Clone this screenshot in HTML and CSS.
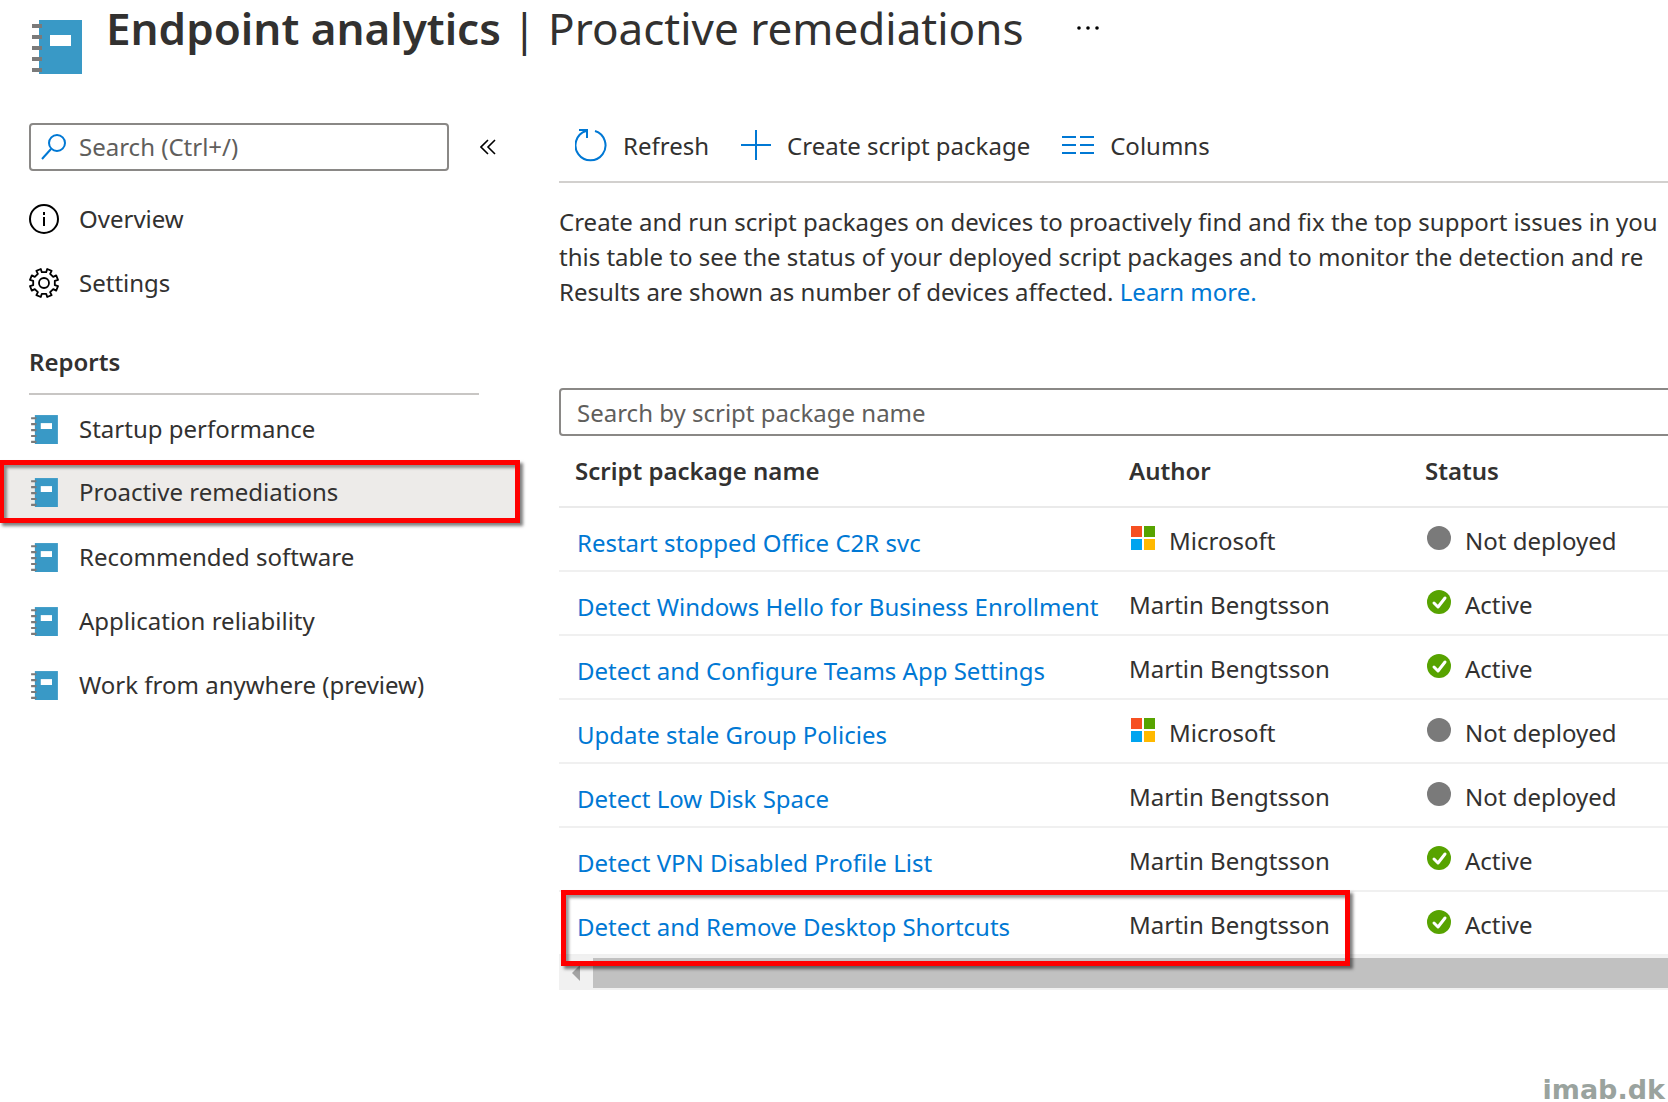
FILE: index.html
```
<!DOCTYPE html>
<html lang="en">

<head>
    <meta charset="utf-8">
    <title>Endpoint analytics | Proactive remediations</title>
    <link rel="stylesheet" href="styles.css">
</head>

<body>
    <!-- shared icons -->
    <svg class="sprite" aria-hidden="true">
        <symbol id="icon-book" viewBox="0 0 50 56">
            <path fill="#3999c6" d="M7 2h43v54H7z" />
            <path fill="#fff" d="M18 17h21v11H18z" />
            <path fill="#7a7a7a" d="M0 6h10v4H0zM0 17h10v4H0zM0 28h10v4H0zM0 39h10v4H0zM0 50h10v4H0z" />
        </symbol>
        <symbol id="icon-microsoft" viewBox="0 0 24 24">
            <path fill="#f65022" d="M0 0h11v11H0z" />
            <path fill="#57a300" d="M13 0h11v11H13z" />
            <path fill="#00a4ef" d="M0 13h11v11H0z" />
            <path fill="#ffb900" d="M13 13h11v11H13z" />
        </symbol>
        <symbol id="icon-off" viewBox="0 0 24 24">
            <circle cx="12" cy="12" r="12" fill="#7a7a7a" />
        </symbol>
        <symbol id="icon-ok" viewBox="0 0 24 24">
            <circle cx="12" cy="12" r="12" fill="#57a300" />
            <path fill="none" stroke="#fff" stroke-width="3" stroke-linecap="round" stroke-linejoin="round" d="M7 13l4 4 7-9" />
        </symbol>
    </svg>

    <header class="title-bar">
        <svg class="title-icon"><use href="#icon-book" /></svg>
        <h1><strong>Endpoint analytics</strong> | Proactive remediations</h1>
        <button type="button" class="more" aria-label="More">
            <svg width="24" height="6" viewBox="0 0 24 6">
                <circle cx="3" cy="3" r="1.8" />
                <circle cx="12" cy="3" r="1.8" />
                <circle cx="21" cy="3" r="1.8" />
            </svg>
        </button>
    </header>

    <div class="layout">
        <nav class="sidebar">
            <div class="menu-search">
                <label class="search-box">
                    <svg width="26" height="26" viewBox="0 0 26 26" fill="none" stroke="#0078d4" stroke-width="2">
                        <circle cx="16" cy="9" r="8" />
                        <path d="M10 15L1 25" />
                    </svg>
                    <input type="text" placeholder="Search (Ctrl+/)" aria-label="Search">
                </label>
                <button type="button" class="collapse" aria-label="Collapse menu">
                    <svg width="16" height="16" viewBox="0 0 16 16" fill="none" stroke="#000" stroke-width="1.6">
                        <path d="M8 1L1 8l7 7M15 1L8 8l7 7" />
                    </svg>
                </button>
            </div>
            <a class="menu-item" href="#">
                <svg class="menu-icon" viewBox="0 0 30 30" fill="none" stroke="#000" stroke-width="2">
                    <circle cx="15" cy="15" r="14" />
                    <path d="M15 13v9M15 8v3" />
                </svg>
                Overview
            </a>
            <a class="menu-item" href="#">
                <svg class="menu-icon" viewBox="-15 -15 30 30" fill="none" stroke="#000" stroke-width="1.8">
                    <circle r="5" />
                    <path stroke-linejoin="round" d="M-3.2 -14L-2.2 -10.8H2.2L3.2 -14L7.6 -12.2L6.1 -9.2L9.2 -6.1L12.2 -7.6L14 -3.2L10.8 -2.2V2.2L14 3.2L12.2 7.6L9.2 6.1L6.1 9.2L7.6 12.2L3.2 14L2.2 10.8H-2.2L-3.2 14L-7.6 12.2L-6.1 9.2L-9.2 6.1L-12.2 7.6L-14 3.2L-10.8 2.2V-2.2L-14 -3.2L-12.2 -7.6L-9.2 -6.1L-6.1 -9.2L-7.6 -12.2z" />
                </svg>
                Settings
            </a>
            <h2>Reports</h2>
            <a class="menu-item" href="#"><svg class="menu-icon book"><use href="#icon-book" /></svg>Startup performance</a>
            <a class="menu-item active" href="#"><svg class="menu-icon book"><use href="#icon-book" /></svg>Proactive remediations</a>
            <a class="menu-item" href="#"><svg class="menu-icon book"><use href="#icon-book" /></svg>Recommended software</a>
            <a class="menu-item" href="#"><svg class="menu-icon book"><use href="#icon-book" /></svg>Application reliability</a>
            <a class="menu-item" href="#"><svg class="menu-icon book"><use href="#icon-book" /></svg>Work from anywhere (preview)</a>
        </nav>

        <main class="content">
            <div class="toolbar">
                <button type="button">
                    <svg width="32" height="34" viewBox="0 0 32 34" fill="none" stroke="#0078d4" stroke-width="2">
                        <path d="M20 3A15 15 0 1 1 11 3M4 2h8v8" />
                    </svg>
                    <span>Refresh</span>
                </button>
                <button type="button">
                    <svg width="30" height="34" viewBox="0 0 30 34" fill="none" stroke="#0078d4" stroke-width="2">
                        <path d="M15 2v30M0 17h30" />
                    </svg>
                    <span>Create script package</span>
                </button>
                <button type="button">
                    <svg width="32" height="34" viewBox="0 0 32 34" fill="none" stroke="#0078d4" stroke-width="2">
                        <path d="M0 9h14M18 9h14M0 17h14M18 17h14M0 25h14M18 25h14" />
                    </svg>
                    <span>Columns</span>
                </button>
            </div>
            <p class="intro">
                Create and run script packages on devices to proactively find and fix the top support issues in you<br>
                this table to see the status of your deployed script packages and to monitor the detection and re<br>
                Results are shown as number of devices affected. <a href="#">Learn more.</a>
            </p>
            <input class="filter" type="text" placeholder="Search by script package name" aria-label="Search by script package name">
            <table>
                <thead>
                    <tr>
                        <th class="col-name">Script package name</th>
                        <th class="col-author">Author</th>
                        <th>Status</th>
                    </tr>
                </thead>
                <tbody>
                    <tr>
                        <td><a href="#">Restart stopped Office C2R svc</a></td>
                        <td><svg class="cell-icon"><use href="#icon-microsoft" /></svg>Microsoft</td>
                        <td><svg class="cell-icon"><use href="#icon-off" /></svg>Not deployed</td>
                    </tr>
                    <tr>
                        <td><a href="#">Detect Windows Hello for Business Enrollment</a></td>
                        <td>Martin Bengtsson</td>
                        <td><svg class="cell-icon"><use href="#icon-ok" /></svg>Active</td>
                    </tr>
                    <tr>
                        <td><a href="#">Detect and Configure Teams App Settings</a></td>
                        <td>Martin Bengtsson</td>
                        <td><svg class="cell-icon"><use href="#icon-ok" /></svg>Active</td>
                    </tr>
                    <tr>
                        <td><a href="#">Update stale Group Policies</a></td>
                        <td><svg class="cell-icon"><use href="#icon-microsoft" /></svg>Microsoft</td>
                        <td><svg class="cell-icon"><use href="#icon-off" /></svg>Not deployed</td>
                    </tr>
                    <tr>
                        <td><a href="#">Detect Low Disk Space</a></td>
                        <td>Martin Bengtsson</td>
                        <td><svg class="cell-icon"><use href="#icon-off" /></svg>Not deployed</td>
                    </tr>
                    <tr>
                        <td><a href="#">Detect VPN Disabled Profile List</a></td>
                        <td>Martin Bengtsson</td>
                        <td><svg class="cell-icon"><use href="#icon-ok" /></svg>Active</td>
                    </tr>
                    <tr class="marked">
                        <td><a href="#">Detect and Remove Desktop Shortcuts</a><span class="marker"></span></td>
                        <td>Martin Bengtsson</td>
                        <td><svg class="cell-icon"><use href="#icon-ok" /></svg>Active</td>
                    </tr>
                </tbody>
            </table>
            <div class="scrollbar">
                <button type="button" aria-label="Scroll left">
                    <svg width="8" height="16" viewBox="0 0 8 16"><path fill="#a3a3a3" d="M8 0v16L0 8z" /></svg>
                </button>
                <div class="thumb"></div>
            </div>
        </main>
    </div>

    <footer class="brand">imab.dk</footer>
</body>

</html>
```
FILE: styles.css
```
* {
    box-sizing: border-box;
}
body {
    display: flex;
    flex-direction: column;
    min-height: 100vh;
    margin: 0;
    overflow: hidden;
    background-color: #fff;
    color: #323130;
    font: 24px/32px "Segoe UI", "Noto Sans", sans-serif;
}
a {
    color: #0078d4;
    text-decoration: none;
}
button {
    padding: 0;
    border: 0;
    background: none;
    color: inherit;
    font: inherit;
}
svg {
    flex: none;
}
.sprite {
    position: absolute;
    width: 0;
    height: 0;
}

/* title */
.title-bar {
    display: flex;
    height: 123px;
    padding-left: 32px;
}
.title-icon {
    width: 50px;
    height: 56px;
    margin: 18px 24px 0 0;
}
h1 {
    margin: 0;
    font-size: 44px;
    font-weight: 400;
    line-height: 56px;
    white-space: nowrap;
}
h1 strong {
    font-weight: 600;
}
.more {
    display: flex;
    align-items: center;
    height: 56px;
    margin-left: 52px;
}

/* side menu */
.layout {
    display: flex;
}
.sidebar {
    flex: none;
    width: 519px;
    margin-right: 40px;
}
.menu-search {
    display: flex;
    align-items: center;
    padding-left: 29px;
    margin-bottom: 16px;
}
.search-box {
    display: flex;
    align-items: center;
    gap: 12px;
    width: 420px;
    height: 48px;
    padding-left: 10px;
    border: 2px solid #8a8886;
    border-radius: 4px;
}
.search-box input {
    flex: 1;
    min-width: 0;
    padding: 0;
    border: 0;
    outline: 0;
    background: none;
    font: inherit;
}
::placeholder {
    color: #605e5c;
    opacity: 1;
}
.collapse {
    display: flex;
    margin-left: 31px;
}
.menu-item {
    display: flex;
    align-items: center;
    gap: 20px;
    height: 64px;
    padding-left: 29px;
    color: inherit;
    white-space: nowrap;
}
.menu-icon {
    width: 30px;
    height: 30px;
}
.menu-icon.book {
    padding-left: 1px;
}
.menu-item.active {
    position: relative;
    height: 62px;
    margin-bottom: 2px;
    background-color: #edebe9;
}
.menu-item.active::after,
.marker {
    position: absolute;
    border: 5px solid #f00;
    box-shadow: 3px 3px 3px rgba(0, 0, 0, .5), inset 3px 3px 3px rgba(0, 0, 0, .4);
}
.menu-item.active::after {
    content: "";
    inset: -1px -1px 0;
}
h2 {
    margin: 31px 0 2px 29px;
    width: 450px;
    height: 49px;
    border-bottom: 2px solid #c8c6c4;
    font-size: 24px;
    font-weight: 600;
    line-height: 32px;
}

/* main pane */
.content {
    flex: 1;
    min-width: 0;
}
.toolbar {
    display: flex;
    gap: 32px;
    height: 60px;
    padding: 5px 0 0 16px;
    border-bottom: 2px solid #d2d0ce;
}
.toolbar button {
    display: flex;
    align-items: flex-start;
    gap: 16px;
    white-space: nowrap;
}
.toolbar span {
    padding-top: 2px;
}
.intro {
    margin: 21px 0 79px;
    line-height: 35px;
    white-space: nowrap;
}
.filter {
    display: block;
    width: calc(100% + 8px);
    height: 48px;
    padding: 0 16px;
    border: 2px solid #8a8886;
    border-radius: 4px;
    font: inherit;
}
table {
    width: 100%;
    border-collapse: separate;
    border-spacing: 0;
    table-layout: fixed;
}
th,
td {
    height: 64px;
    padding: 3px 0 0;
    border-bottom: 2px solid #f0f0f0;
    text-align: left;
    white-space: nowrap;
}
th {
    height: 72px;
    padding: 0 0 1px 0;
    border-bottom-color: #eaeaea;
    font-weight: 600;
}
th:first-child {
    padding-left: 16px;
}
td:first-child {
    padding: 8px 0 0 18px;
}
.col-name {
    width: 570px;
}
.col-author {
    width: 296px;
}
.cell-icon {
    width: 24px;
    height: 24px;
    margin: 0 14px 0 2px;
}
.marked {
    position: relative;
}
.marker {
    top: -2px;
    left: 2px;
    z-index: 1;
    width: 789px;
    height: 76px;
}
.scrollbar {
    display: flex;
    height: 34px;
    padding: 2px 0;
    background-color: #f1f1f1;
}
.scrollbar button {
    display: flex;
    align-items: center;
    width: 34px;
    padding-left: 13px;
}
.thumb {
    flex: 1;
    background-color: #c1c1c1;
}

.brand {
    margin-top: auto;
    padding-right: 3px;
    color: #9aa39e;
    font: bold 27px/24px "DejaVu Sans", sans-serif;
    text-align: right;
}
```
